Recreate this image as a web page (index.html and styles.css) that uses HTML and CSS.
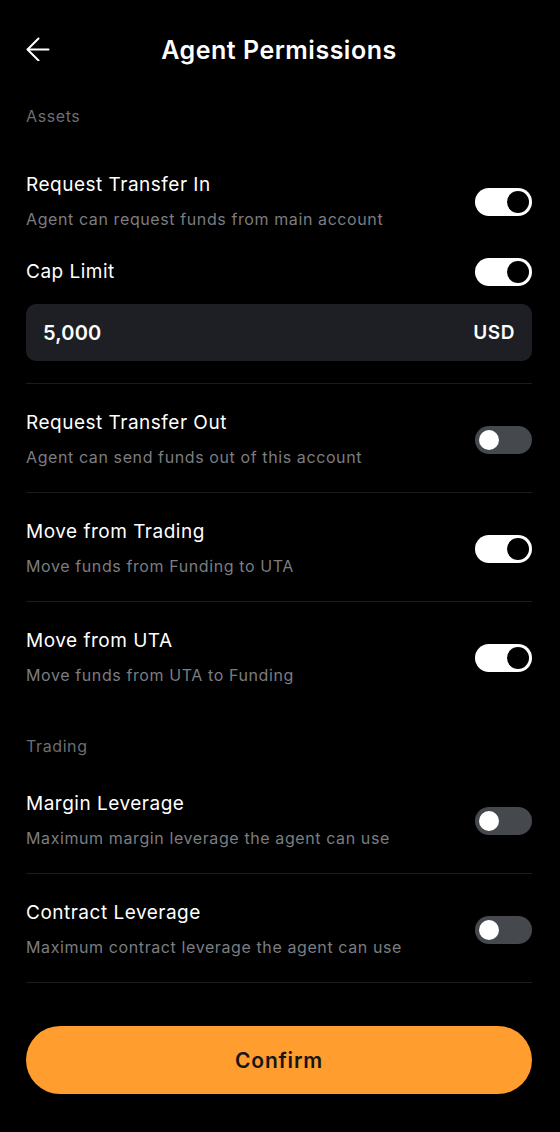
FILE: index.html
```html
<!DOCTYPE html>
<html lang="en">
<head>
<meta charset="utf-8">
<title>Agent Permissions</title>
<link rel="stylesheet" href="styles.css">
</head>
<body>
<div class="page">
  <header class="header">
    <svg class="back" width="24" height="24" viewBox="0 0 24 24" fill="none" stroke="#fff" stroke-width="2" stroke-linecap="round" stroke-linejoin="round">
      <path d="M22.5 12.5H2"/>
      <path d="M12.5 1.5L1.5 12.5L12.5 23.5"/>
    </svg>
    <h1 class="title">Agent Permissions</h1>
  </header>

  <div class="section-label first">Assets</div>

  <div class="row row-first">
    <div class="text">
      <div class="name">Request Transfer In</div>
      <div class="desc">Agent can request funds from main account</div>
    </div>
    <span class="toggle on"></span>
  </div>

  <div class="row row-cap">
    <div class="name">Cap Limit</div>
    <span class="toggle on"></span>
  </div>

  <div class="amount">
    <span class="value">5,000</span>
    <span class="unit">USD</span>
  </div>

  <div class="row item divided">
    <div class="text">
      <div class="name">Request Transfer Out</div>
      <div class="desc">Agent can send funds out of this account</div>
    </div>
    <span class="toggle"></span>
  </div>

  <div class="row item divided">
    <div class="text">
      <div class="name">Move from Trading</div>
      <div class="desc">Move funds from Funding to UTA</div>
    </div>
    <span class="toggle on"></span>
  </div>

  <div class="row item divided">
    <div class="text">
      <div class="name">Move from UTA</div>
      <div class="desc">Move funds from UTA to Funding</div>
    </div>
    <span class="toggle on"></span>
  </div>

  <div class="section-label second">Trading</div>

  <div class="row item item-first">
    <div class="text">
      <div class="name">Margin Leverage</div>
      <div class="desc">Maximum margin leverage the agent can use</div>
    </div>
    <span class="toggle"></span>
  </div>

  <div class="row item divided bottom-line">
    <div class="text">
      <div class="name">Contract Leverage</div>
      <div class="desc">Maximum contract leverage the agent can use</div>
    </div>
    <span class="toggle"></span>
  </div>

  <button class="confirm">Confirm</button>
</div>
</body>
</html>
```

FILE: styles.css
```css
* { box-sizing: border-box; }
html, body {
  margin: 0;
  padding: 0;
  background: #000;
}
body {
  font-family: Inter, "Noto Sans", "Liberation Sans", sans-serif;
  color: #fff;
}
.page {
  width: 560px;
  min-height: 1132px;
  padding: 0 28px 0 26px;
  display: flex;
  flex-direction: column;
}
.header {
  height: 98px;
  position: relative;
  display: flex;
  align-items: center;
  justify-content: center;
}
.back {
  position: absolute;
  left: 0;
  top: 37px;
}
.title {
  margin: 1px 0 0;
  font-size: 25px;
  font-weight: 600;
  line-height: 32px;
  letter-spacing: 0.5px;
}
.section-label {
  font-size: 16px;
  line-height: 24px;
  letter-spacing: 0.6px;
  color: #6c6e72;
}
.section-label.first { margin-top: 6px; }
.section-label.second { margin-top: 24px; }

.row {
  display: flex;
  align-items: center;
  justify-content: space-between;
}
.text {
  display: flex;
  flex-direction: column;
  gap: 9px;
}
.name {
  font-size: 19px;
  line-height: 26px;
  letter-spacing: 0.5px;
}
.desc {
  font-size: 16px;
  line-height: 24px;
  letter-spacing: 0.6px;
  color: #7b7d81;
}
.row-first { margin-top: 44px; }
.row-cap { margin-top: 27px; height: 28px; }

.amount {
  margin-top: 18px;
  height: 57px;
  background: #1e1f24;
  border-radius: 10px;
  padding: 0 17px;
  display: flex;
  align-items: center;
  justify-content: space-between;
}
.value {
  font-size: 20px;
  font-weight: 600;
  letter-spacing: 0.2px;
}
.unit {
  font-size: 19px;
  font-weight: 600;
  letter-spacing: 0.6px;
}

.item {
  padding: 26px 0 23px;
}
.divided {
  border-top: 1px solid #1b1c1f;
}
.amount + .divided { margin-top: 22px; }
.item-first { padding-top: 33px; }
.bottom-line {
  border-bottom: 1px solid #1b1c1f;
}

.toggle {
  flex: none;
  width: 57px;
  height: 28px;
  border-radius: 14px;
  background: #45484d;
  position: relative;
}
.toggle::after {
  content: "";
  position: absolute;
  left: 4px;
  top: 4px;
  width: 20px;
  height: 20px;
  border-radius: 50%;
  background: #fff;
}
.toggle.on { background: #fff; }
.toggle.on::after {
  left: auto;
  right: 3px;
  top: 3px;
  width: 22px;
  height: 22px;
  background: #000;
}

.confirm {
  margin-top: 43px;
  height: 68px;
  width: 100%;
  border: none;
  border-radius: 34px;
  background: #ff9d2e;
  color: #161616;
  font-family: inherit;
  font-size: 21px;
  font-weight: 600;
  letter-spacing: 0.8px;
}
```
